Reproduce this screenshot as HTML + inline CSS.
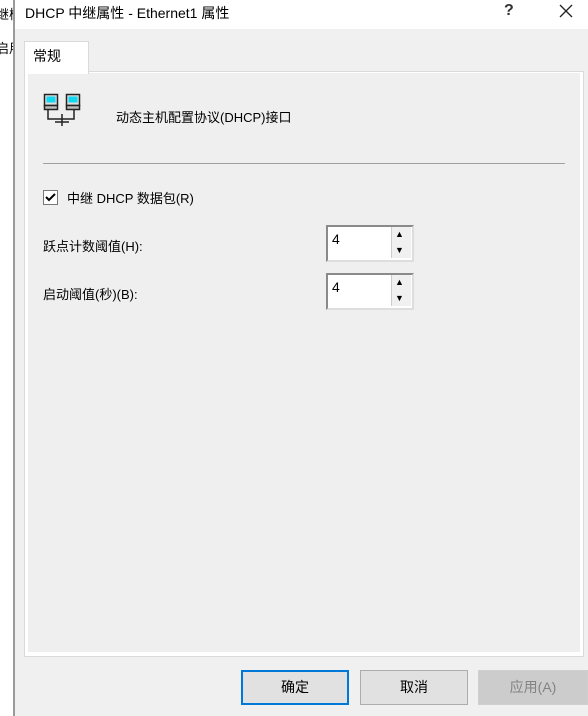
<!DOCTYPE html>
<html><head><meta charset="utf-8"><style>
body{margin:0;width:588px;height:716px;overflow:hidden;background:#fff;font-family:"Liberation Sans","Noto Sans CJK SC",sans-serif;font-size:13px;color:#000;position:relative}
.a{position:absolute;white-space:nowrap}
</style></head><body>
<div class="a" style="left:0;top:0;width:13px;height:716px;background:#fff;overflow:hidden"><div class="a" style="left:-4px;top:4px;font-size:13px">继楼</div><div class="a" style="left:-4px;top:38px;font-size:13px">启用</div></div>
<div class="a" style="left:13px;top:0;width:2px;height:716px;background:#9a9a9a"></div>
<div class="a" style="left:15px;top:0;width:573px;height:29px;background:#fff"></div>
<div class="a" style="left:25px;top:3px;font-size:14px;color:#000">DHCP 中继属性 - Ethernet1 属性</div>
<div class="a" style="left:504px;top:2px;font-size:16px;font-weight:bold;color:#333">?</div>
<svg class="a" style="left:559px;top:4px" width="14" height="14"><path d="M1 1L13 13M13 1L1 13" stroke="#222" stroke-width="1.3"/></svg>
<div class="a" style="left:15px;top:29px;width:573px;height:687px;background:#f0f0f0"></div>
<div class="a" style="left:24px;top:71px;width:558px;height:584px;border:1px solid #dadada;background:#fff"></div>
<div class="a" style="left:28px;top:73px;width:552px;height:579px;background:#efefef"></div>
<div class="a" style="left:24px;top:41px;width:63px;height:32px;border:1px solid #dadada;border-bottom:none;background:#fff"></div>
<div class="a" style="left:33px;top:46px;font-size:14px">常规</div>
<svg class="a" style="left:43px;top:93px" width="42" height="40">
<rect x="1.5" y="1.5" width="13" height="11" fill="#ddd" stroke="#222" stroke-width="1.5"/><rect x="3.5" y="3.5" width="9" height="6" fill="#10d8f0"/><rect x="1.5" y="12.5" width="13" height="4" fill="#bbb" stroke="#222" stroke-width="1.5"/>
<rect x="23.5" y="1.5" width="13" height="11" fill="#ddd" stroke="#222" stroke-width="1.5"/><rect x="25.5" y="3.5" width="9" height="6" fill="#10d8f0"/><rect x="23.5" y="12.5" width="13" height="4" fill="#bbb" stroke="#222" stroke-width="1.5"/>
<path d="M5 17V26H14M31 17V26H24M14 26H24M19 21V33M12 29H26" stroke="#222" stroke-width="1.5" fill="none"/></svg>
<div class="a" style="left:116px;top:107px;font-size:13px">动态主机配置协议(DHCP)接口</div>
<div class="a" style="left:43px;top:163px;width:522px;height:1px;background:#a0a0a0"></div>
<div class="a" style="left:43px;top:190px;width:13px;height:13px;border:1px solid #777;background:#fff"></div>
<svg class="a" style="left:45px;top:192px" width="11" height="11"><path d="M1 5L4 8L10 2" stroke="#000" stroke-width="2" fill="none"/></svg>
<div class="a" style="left:67px;top:188px;font-size:13px">中继 DHCP 数据包(R)</div>
<div class="a" style="left:43px;top:236px;font-size:13px">跃点计数阈值(H):</div>
<div class="a" style="left:43px;top:284px;font-size:13px">启动阈值(秒)(B):</div>
<div class="a" style="left:326px;top:225px;width:84px;height:33px;border:2px solid #8a8a8a;border-right-color:#ddd;border-bottom-color:#ddd;background:#fff"></div>
<div class="a" style="left:332px;top:231px;font-size:14px">4</div>
<div class="a" style="left:391px;top:227px;width:19px;height:31px;background:#f0f0f0;border-left:1px solid #ccc"></div>
<div class="a" style="left:395px;top:229px;font-size:9px">▲</div><div class="a" style="left:395px;top:245px;font-size:9px">▼</div>
<div class="a" style="left:326px;top:273px;width:84px;height:33px;border:2px solid #8a8a8a;border-right-color:#ddd;border-bottom-color:#ddd;background:#fff"></div>
<div class="a" style="left:332px;top:279px;font-size:14px">4</div>
<div class="a" style="left:391px;top:275px;width:19px;height:31px;background:#f0f0f0;border-left:1px solid #ccc"></div>
<div class="a" style="left:395px;top:277px;font-size:9px">▲</div><div class="a" style="left:395px;top:293px;font-size:9px">▼</div>
<div class="a" style="left:241px;top:670px;width:104px;height:31px;border:2px solid #0078d7;background:#e1e1e1;text-align:center;line-height:31px;font-size:14px">确定</div>
<div class="a" style="left:360px;top:670px;width:106px;height:33px;border:1px solid #adadad;background:#e1e1e1;text-align:center;line-height:33px;font-size:14px">取消</div>
<div class="a" style="left:478px;top:670px;width:108px;height:33px;border:1px solid #cfcfcf;background:#cccccc;text-align:center;line-height:33px;font-size:14px;color:#838383">应用(A)</div>
</body></html>
